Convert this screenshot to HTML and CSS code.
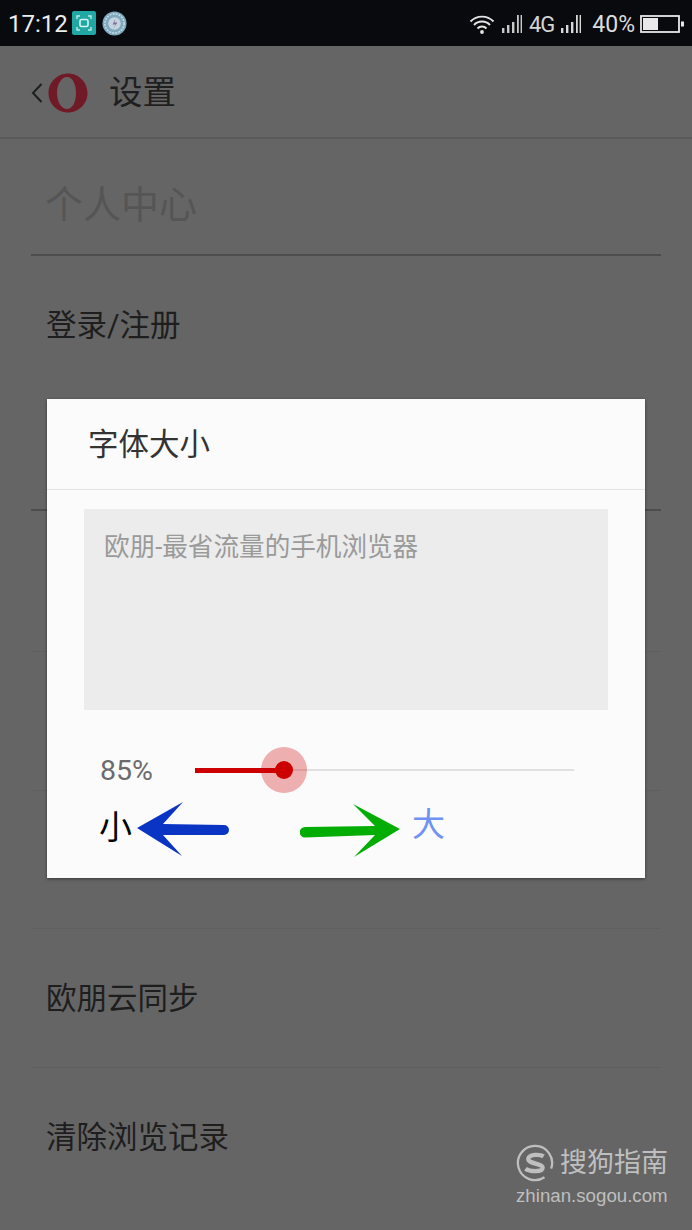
FILE: index.html
```html
<!DOCTYPE html>
<html lang="zh">
<head>
<meta charset="utf-8">
<title>设置</title>
<link rel="stylesheet" href="styles.css">
</head>
<body>
<div class="phone">
  <header class="statusbar">
    <span class="clock">17:12</span>
    <svg class="sb-app" viewBox="0 0 24 24"><rect width="24" height="24" rx="2" fill="#1fa8a4"/><path d="M5 8V5h3M16 5h3v3M19 16v3h-3M8 19H5v-3" fill="none" stroke="#bfe8e6" stroke-width="1.4"/><rect x="8" y="8.500" width="8" height="7" rx="1.500" fill="none" stroke="#d8f2f0" stroke-width="1.600"/></svg>
    <svg class="sb-globe" viewBox="0 0 26 26"><circle cx="13" cy="13" r="12.500" fill="#7fa9bd"/><circle cx="13" cy="13" r="10" fill="none" stroke="#c9dde6" stroke-width="1.600" stroke-dasharray="2 1.200"/><circle cx="13" cy="13" r="6.500" fill="#c4d4de"/><path d="M14 8l-3 6h3l-2 4 4-6h-3z" fill="#7f6f9c"/></svg>
    <span class="sb-spacer"></span>
    <svg class="sb-wifi" viewBox="0 0 26 20"><path d="M1.500 7.500a16 16 0 0 1 23 0M5 11a11 11 0 0 1 16 0M8.500 14.500a6 6 0 0 1 9 0" fill="none" stroke="#e4e4e4" stroke-width="1.900"/><circle cx="13" cy="18" r="1.900" fill="#e4e4e4"/></svg>
    <svg class="sb-sig sig1" viewBox="0 0 22 20"><path d="M1 14h2.400v5H1zM6 11h2.400v8H6zM11 8h2.400v11H11zM16 1h1.800v18H16zM19.600 1h1.400v18h-1.400z" fill="#c9c9c9"/></svg>
    <span class="sb-4g">4G</span>
    <svg class="sb-sig sig2" viewBox="0 0 22 20"><path d="M1 14h2.400v5H1zM6 11h2.400v8H6zM11 8h2.400v11H11zM16 1h1.800v18H16zM19.600 1h1.400v18h-1.400z" fill="#d8d8d8"/></svg>
    <span class="sb-pct">40%</span>
    <svg class="sb-batt" viewBox="0 0 44 18"><rect x="1" y="1" width="38" height="16" fill="none" stroke="#e8e8e8" stroke-width="1.800"/><rect x="3" y="3" width="15" height="12" fill="#e8e8e8"/><rect x="41" y="6.500" width="3" height="5" fill="#e8e8e8"/></svg>
  </header>

  <div class="app">
    <div class="toolbar">
      <svg class="back" viewBox="0 0 12 22"><path d="M10.500 2 2 11l8.500 9" fill="none" stroke="#1f1f1f" stroke-width="2"/></svg>
      <svg class="opera" viewBox="0 0 40 40"><path fill-rule="evenodd" d="M20 0.500C9.500 0.500 0.500 9 0.500 20S9.500 39.500 20 39.500 39.500 31 39.500 20 30.500 0.500 20 0.500zM19 4c5.500 0 9 7 9 16s-3.500 16-9 16S9 29 9 20 13.500 4 19 4z" fill="#701a28"/></svg>
      <h1 class="title">设置</h1>
    </div>

    <section class="group">
      <h2 class="group-head">个人中心</h2>
      <div class="row row-login">登录/注册</div>
      <div class="row row-gap-a"></div>
      <div class="row row-gap-b"></div>
      <div class="row row-gap-d"></div>
      <div class="row">欧朋云同步</div>
      <div class="row row-last">清除浏览记录</div>
    </section>
  </div>

  <div class="dialog">
    <div class="dialog-title">字体大小</div>
    <div class="preview">欧朋-最省流量的手机浏览器</div>
    <div class="slider-row">
      <span class="percent">85%</span>
      <div class="slider">
        <div class="slider-fill"></div>
        <div class="slider-halo"><div class="slider-knob"></div></div>
      </div>
    </div>
    <div class="size-row">
      <span class="small-label">小</span>
      <svg class="arrow-blue" viewBox="0 0 94 56"><path d="M0 26 46 0 26 22 87 23a5 5 0 0 1 0 10L26 33 45 54z" fill="#0a35c4"/></svg>
      <svg class="arrow-green" viewBox="0 0 100 56"><path d="M100 27 53 2 75 24 5 25a5 5 0 0 0 0 10.500L75 33 54 55z" fill="#04ad04"/></svg>
      <span class="big-label">大</span>
    </div>
  </div>

  <div class="watermark">
    <div class="wm-top">
      <svg class="wm-logo" viewBox="0 0 40 40"><path d="M30 35A18 18 0 1 1 37 26" fill="none" stroke="#bfbfbf" stroke-width="2.400"/><path d="M29 13c-3-2-15-3-16 2.500S28 20 28 25 14 29 10 26" fill="none" stroke="#bfbfbf" stroke-width="4.600"/></svg>
      <span class="wm-name">搜狗指南</span>
    </div>
    <div class="wm-url">zhinan.sogou.com</div>
  </div>
</div>
</body>
</html>
```
FILE: styles.css
```css
* { box-sizing: border-box; }
html, body { margin: 0; padding: 0; }
body { background: #656565; font-family: "Roboto", "Noto Sans CJK SC", sans-serif; }
.phone { position: relative; width: 692px; height: 1230px; overflow: hidden; background: #656565; }

.statusbar { height: 46px; background: #090a0d; display: flex; align-items: center; padding: 2px 10px 0 8px; color: #e8e8e8; }
.clock { font-size: 24px; line-height: 44px; width: 64px; color: #ededed; }
.sb-app { width: 24px; height: 24px; margin-top: -2px; }
.sb-globe { width: 25px; height: 25px; margin-left: 6px; margin-top: -2px; }
.sb-spacer { flex: 1; }
.sb-wifi { width: 26px; height: 20px; }
.sb-sig { width: 22px; height: 20px; }
.sig1 { margin-left: 6px; }
.sb-4g { font-size: 22px; margin-left: 6px; color: #d4d4d4; letter-spacing: -1px; }
.sig2 { margin-left: 6px; }
.sb-pct { font-size: 23px; margin-left: 10px; color: #dcdcdc; }
.sb-batt { width: 44px; height: 18px; margin-left: 5px; margin-right: -2px; }

.toolbar { height: 93px; display: flex; align-items: center; padding: 2px 0 0 31px; border-bottom: 2px solid #5a5a5a; }
.back { width: 12px; height: 22px; }
.opera { width: 40px; height: 40px; margin-left: 5px; }
.title { margin: 0 0 0 21px; font-size: 33.500px; font-weight: 400; color: #1f1f1f; line-height: 40px; }

.group { padding: 0 31px; }
.group-head { margin: 0; height: 117px; padding: 43px 0 0 14px; font-size: 38px; line-height: 46px; font-weight: 400; color: #555; border-bottom: 2px solid #4d4d4d; }
.row { height: 139px; padding: 50px 0 0 15px; font-size: 30.500px; line-height: 40px; color: #1e1e1e; border-bottom: 1px solid #5f5f5f; }
.row-login { height: 255px; border-bottom: 2px solid #4d4d4d; }
.row-gap-a { height: 141px; }
.row-gap-b { height: 139px; }
.row-gap-d { height: 138px; }
.row-last { border-bottom: 0; }

.dialog { position: absolute; left: 47px; top: 399px; width: 598px; height: 479px; background: #fbfbfb; box-shadow: 0 1px 3px rgba(0,0,0,.45); display: flex; flex-direction: column; }
.dialog-title { height: 91px; padding: 24px 0 0 41px; font-size: 30.500px; line-height: 44px; color: #333; border-bottom: 1px solid #e4e4e4; }
.preview { margin: 19px 37px 0; height: 201px; background: #ececec; padding: 19px 20px; font-size: 25.600px; line-height: 38px; color: #9a9a9a; }
.slider-row { display: flex; align-items: center; margin: 37px 0 0 53px; height: 46px; }
.percent { width: 95px; font-size: 28.500px; color: #6b6b6b; }
.slider { position: relative; width: 379px; height: 2px; background: #e0e0e0; }
.slider-fill { position: absolute; left: 0; top: -1.500px; width: 89px; height: 5px; background: #cc0000; }
.slider-halo { position: absolute; left: 66px; top: -22px; width: 46px; height: 46px; border-radius: 50%; background: rgba(204,0,0,.3); display: flex; align-items: center; justify-content: center; }
.slider-knob { width: 18px; height: 18px; border-radius: 50%; background: #cc0000; }
.size-row { display: flex; align-items: center; margin: 9px 0 0 52px; height: 56px; }
.small-label { font-size: 33px; line-height: 40px; color: #000; width: 38px; margin-top: -4px; }
.arrow-blue { width: 94px; height: 56px; }
.arrow-green { width: 100px; height: 56px; margin-left: 69px; }
.big-label { font-size: 33px; line-height: 40px; color: #6f93f2; margin-left: 12px; margin-top: -10px; }

.watermark { position: absolute; left: 516px; top: 1143px; width: 156px; color: #bfbfbf; }
.wm-top { display: flex; align-items: center; height: 40px; }
.wm-logo { width: 38px; height: 38px; }
.wm-name { font-size: 27px; line-height: 40px; margin-left: 6px; white-space: nowrap; }
.wm-url { font-family: "Liberation Sans", sans-serif; font-size: 18.700px; line-height: 24px; margin-top: 1px; white-space: nowrap; }
```
